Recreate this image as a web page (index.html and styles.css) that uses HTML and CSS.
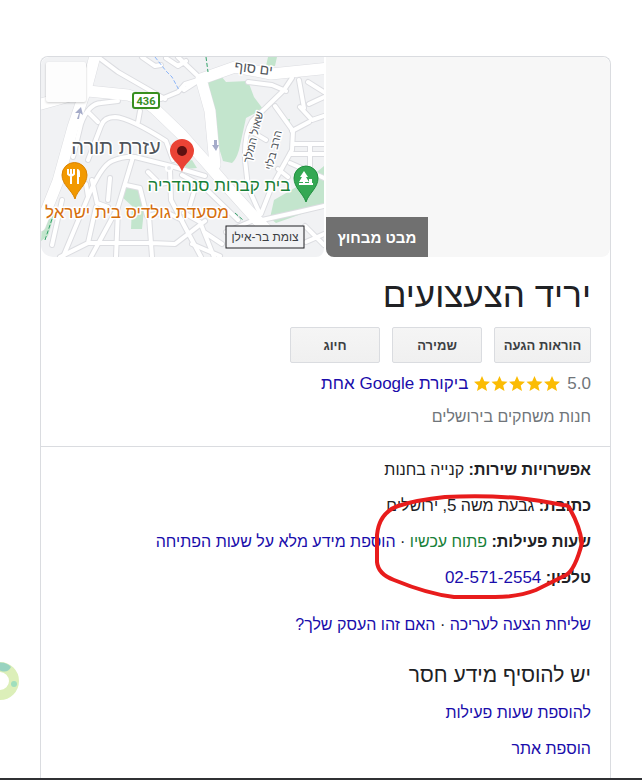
FILE: index.html
```html
<!DOCTYPE html>
<html lang="he" dir="rtl">
<head>
    <meta charset="UTF-8">
    <meta name="viewport" content="width=device-width, initial-scale=1.0">
    <title>יריד הצעצועים</title>
    <link rel="stylesheet" href="styles.css">
</head>
<body>
    <main class="card">
        <div class="media">
            <div class="photo">
                <button class="photo-label" type="button">מבט מבחוץ</button>
            </div>
            <div class="map">
                <svg viewBox="41 57 284 200" preserveAspectRatio="xMinYMid slice" role="img" aria-label="מפה">
                    <defs>
                        <g id="streets">
                            <path d="M98 57L118 72L165 99M161 99L178 92L185 84L201 79M178 57L201 79M166 58L178 66L186 61M184 90L201 79M142 57L155 66L161 65"/>
                            <path d="M73 157L81 124Q88 104 101 103L118 101M88 112L98 122M88 160L101 126Q104 117 115 117Q130 118 166 141L173 160M138 122L140 111"/>
                            <path d="M248 82L272 85L286 91M292 78L284 90L252 121Q244 134 245 160L248 187L260 214M275 106L293 131L292 150L272 186L261 214M254 133L266 140M278 169L288 177"/>
                            <path d="M292 131L309 122M293 144H324M290 154H324M299 80L304 108M300 107L312 120L324 116M308 82L324 92M309 104L324 97M310 144V166M290 163L324 178"/>
                            <path d="M63 257L88 197Q101 166 112 161Q124 156 135 157L171 166L205 176M133 157L118 207L91 257M88 197L86 184M92 180L97 203L108 207M110 178L108 200"/>
                            <path d="M60 257L88 243H151L175 244L205 221M118 210L116 257M149 216L152 257M96 207L88 243M126 185L140 188L147 216L166 212L182 220M170 170L171 200L185 227L201 257M148 172L160 184L171 182M62 200L52 245"/>
                            <path d="M182 175L204 187L238 220M184 213L200 222L214 257M192 244L220 256M222 244L204 232M262 220L298 212L324 206M305 226L324 245M306 242L324 234M254 220L226 232M196 185L190 205"/>
                        </g>
                        <g id="avenues">
                            <path d="M34 106L88 91L128 95Q145 100 155 109L181 134L205 161L231 191L258 221L270 233"/>
                            <path d="M96 52L87 86L73 127L58 181L40 226"/>
                            <path d="M201 79L235 67L271 74L330 68M201 79L210 111L215 165"/>
                        </g>
                    </defs>
                    <rect class="land" x="41" y="57" width="284" height="200"/>
                    <path class="park" d="M208 81L221 76L226 82L248 81L254 97L263 109L246 118L239 150Q236 160 232 163L223 161L216 138ZM268 57H277L275 66H266ZM184 162L192 160L197 168L186 169ZM285 119L290 119V124L283 121ZM122 197L127 183L142 186L141 197L144 210L142 229L131 229L132 206ZM274 200L305 182L324 166V206L276 223L270 218ZM42 226L55 212L48 236L41 241Z"/>
                    <use href="#streets" class="road-edge"/>
                    <use href="#avenues" class="avenue-edge"/>
                    <use href="#streets" class="road"/>
                    <use href="#avenues" class="avenue"/>
                    <circle class="roundabout" cx="169" cy="168" r="3"/>
                    <path class="path-blue" d="M155 57L166 71L172 77L179 90"/>
                    <path class="path-green" d="M206 57L208 72M45 240L54 213M235 213L243 220"/>
                    <path class="arrow" d="M77 119L79 113L75 113L81 107L83 115L80 113L79 119ZM214 140H217V145H219L216 151L212 145H214Z"/>
                    <rect class="thumb" x="46" y="62" width="40" height="40" rx="2"/>

                    <rect class="route" x="133" y="93" width="26" height="15" rx="2"/>
                    <text class="route-number" x="146" y="105">436</text>

                    <text class="place area" x="116" y="154">עזרת תורה</text>
                    <text class="street" transform="translate(253 73) rotate(7)">ים סוף</text>
                    <text class="street small" transform="translate(257 138) rotate(-76)">שאול המלך</text>
                    <text class="street small" transform="translate(277 151) rotate(-76)">הרב בלוי</text>
                    <text class="place cemetery" x="219" y="191">בית קברות סנהדריה</text>
                    <text class="place food" x="137" y="218">מסעדת גולדיס בית ישראל</text>

                    <rect class="station" x="226" y="226" width="78" height="22"/>
                    <text class="station-name" x="265" y="241">צומת בר-אילן</text>

                    <path class="pin-red" d="M182 172C180 163 170 160 170 151A12 12 0 0 1 194 151C194 160 184 163 182 172Z"/>
                    <circle class="pin-dot" cx="182" cy="151" r="5"/>
                    <path class="pin-orange" d="M75 199C72 190 62 185 62 175A12 12 0 0 1 87 175C87 185 77 190 75 199Z"/>
                    <path class="fork" d="M68 169V174Q71 177 74 174V169M71 169V184M78 184V170"/>
                    <path class="glyph" d="M77 169Q80 169 80 173V177H77Z"/>
                    <path class="pin-green" d="M306 202C303 193 294 188 294 178A12 12 0 0 1 318 178C318 188 309 193 306 202Z"/>
                    <path class="glyph" d="M304 171L308 177H306L309 182H305V183H313V185H299V183H303V182H299L302 177H300ZM309 179H312V183H309Z"/>
                </svg>
            </div>
        </div>

        <header class="summary">
            <h1>יריד הצעצועים</h1>
            <div class="actions">
                <button class="wide" type="button">הוראות הגעה</button>
                <button type="button">שמירה</button>
                <button type="button">חיוג</button>
            </div>
            <div class="rating">
                <span>5.0</span>
                <svg class="stars" viewBox="0 0 87 16" role="img" aria-label="5 כוכבים">
                    <defs>
                        <path id="star" d="M8 0L10.3 5.3L16 5.8L11.7 9.6L13 15L8 12.1L3 15L4.3 9.6L0 5.8L5.7 5.3Z"/>
                    </defs>
                    <use href="#star"/>
                    <use href="#star" x="17.5"/>
                    <use href="#star" x="35"/>
                    <use href="#star" x="52.5"/>
                    <use href="#star" x="70"/>
                </svg>
                <a href="#">ביקורת Google אחת</a>
            </div>
            <p class="category">חנות משחקים בירושלים</p>
        </header>

        <section class="details">
            <p><b>אפשרויות שירות:</b> קנייה בחנות</p>
            <p><b>כתובת:</b> גבעת משה <span class="latin">5</span>, ירושלים</p>
            <p><b>שעות פעילות:</b> <span class="open">פתוח עכשיו</span> · <a href="#">הוספת מידע מלא על שעות הפתיחה</a></p>
            <p><b>טלפון:</b> <a class="latin" href="#" dir="ltr">02-571-2554</a></p>
            <svg class="marker" viewBox="0 0 212 108" aria-hidden="true">
                <path d="M190 12Q165 7 145 5Q110 2 72 4Q43 7 25 13Q6 20 4 42V69Q5 81 21 87Q55 101 81 104H122Q145 104 163 97L193 82Q202 77 209 50Q207 34 197 16Q196 12 190 12"/>
            </svg>
        </section>

        <p class="suggest"><a href="#">שליחת הצעה לעריכה</a> · <a href="#">האם זהו העסק שלך?</a></p>

        <section class="missing">
            <h2>יש להוסיף מידע חסר</h2>
            <p><a href="#">להוספת שעות פעילות</a></p>
            <p><a href="#">הוספת אתר</a></p>
        </section>
    </main>

    <svg class="ring" viewBox="0 0 20 40" aria-hidden="true">
        <circle class="ring-base" cx="0" cy="20" r="14"/>
        <path class="ring-teal" d="M-4 2Q6 0 11 6Q8 12 1 10L-4 8Z"/>
        <circle class="ring-dot" cx="14" cy="23" r="3"/>
    </svg>
    <footer class="bottom-bar"></footer>
</body>
</html>
```
FILE: styles.css
```css
* {
    box-sizing: border-box;
}
body {
    display: flex;
    flex-direction: column;
    min-height: 100vh;
    margin: 0;
    padding-top: 56px;
    background-color: #fff;
    color: #202124;
    font-family: "Liberation Sans", Arial, sans-serif;
    font-size: 16px;
    line-height: 24px;
}
h1, h2, p {
    margin: 0;
    font-weight: normal;
}
a {
    color: #1a0dab;
    text-decoration: none;
}
.latin {
    font-size: 17px;
}
.card {
    flex: 1;
    margin: 0 31px 0 40px;
    border: 1px solid #dadce0;
    border-bottom: none;
    border-radius: 8px 8px 0 0;
}

/* map and photo */
.media {
    display: grid;
    grid-template-columns: 285fr 283fr;
    gap: 2px;
    height: 200px;
    overflow: hidden;
    border-radius: 8px;
}
.photo {
    display: flex;
    justify-content: flex-end;
    align-items: flex-end;
    overflow: hidden;
    border-radius: 0 8px 8px 8px;
    background-color: #f7f7f7;
}
.photo-label {
    height: 40px;
    padding: 0 12px;
    border: none;
    background-color: #707070;
    color: #fff;
    font: bold 15px "Liberation Sans", Arial, sans-serif;
}
.map {
    overflow: hidden;
    border-radius: 8px 0 8px 12px;
}
.map svg {
    display: block;
    width: 100%;
    height: 100%;
}
.map text {
    direction: ltr;
    text-anchor: middle;
    stroke: #fff;
    stroke-width: 3px;
    stroke-linejoin: round;
    paint-order: stroke;
}
.land {
    fill: #f1f2f4;
}
.park {
    fill: #c3e5cd;
}
.road-edge, .road, .avenue-edge, .avenue {
    fill: none;
    stroke-linejoin: round;
    stroke-linecap: round;
}
.road-edge {
    stroke: #dcdde1;
    stroke-width: 6px;
}
.avenue-edge {
    stroke: #dcdde1;
    stroke-width: 12px;
}
.road {
    stroke: #fff;
    stroke-width: 4px;
}
.avenue {
    stroke: #fff;
    stroke-width: 11px;
}
.roundabout {
    fill: #e8eaed;
    stroke: #fff;
    stroke-width: 2px;
}
.path-blue, .path-green {
    fill: none;
    stroke-dasharray: 4 2;
}
.path-blue {
    stroke: #8ab4f8;
}
.path-green {
    stroke: #34a36a;
}
.arrow {
    fill: #a5abc9;
}
.thumb {
    fill: #fdfdfd;
    filter: drop-shadow(0 1px 1px rgba(0, 0, 0, 0.2));
}
.route {
    fill: #fff;
    stroke: #388e1f;
    stroke-width: 2px;
}
.map .route-number {
    fill: #388e1f;
    stroke: none;
    font: bold 11px Roboto, sans-serif;
}
.place {
    fill: #50555b;
    font-size: 17px;
}
.area {
    font-size: 20px;
}
.street {
    fill: #50555b;
    font-size: 14px;
}
.small {
    font-size: 11px;
}
.cemetery {
    fill: #188038;
}
.food {
    fill: #d56e0c;
}
.station {
    fill: #f1f2f4;
    stroke: #202124;
    stroke-width: 1px;
}
.map .station-name {
    fill: #3c4043;
    stroke: none;
    font-size: 12px;
}
.pin-red {
    fill: #ea4335;
}
.pin-dot {
    fill: #5f1111;
}
.pin-orange {
    fill: #f29900;
    stroke: #d98200;
}
.pin-green {
    fill: #34a853;
    stroke: #1e8e3e;
}
.glyph {
    fill: #fff;
}
.fork {
    fill: none;
    stroke: #fff;
    stroke-width: 2px;
}

/* title block */
.summary {
    padding: 16px 19px 17px;
    border-bottom: 1px solid #dadce0;
}
h1 {
    font-size: 35px;
    line-height: 44px;
}
.actions {
    display: flex;
    gap: 12px;
    margin-top: 10px;
}
.actions button {
    width: 90px;
    height: 36px;
    padding: 0;
    border: 1px solid #dadce0;
    border-radius: 2px;
    background: linear-gradient(#f5f5f5, #f0f0f0);
    color: #3c4043;
    font: bold 13px "Liberation Sans", Arial, sans-serif;
}
.actions .wide {
    width: 97px;
}
.rating {
    display: flex;
    align-items: center;
    gap: 6px;
    margin-top: 9px;
    color: #70757a;
    font-size: 17px;
}
.stars {
    width: 87px;
    height: 16px;
    fill: #fbbc04;
}
.category {
    margin-top: 9px;
    color: #70757a;
}

/* facts */
.details {
    position: relative;
    display: flex;
    flex-direction: column;
    gap: 12px;
    padding: 11px 19px 0;
}
.open {
    color: #188038;
}
.marker {
    position: absolute;
    top: 46px;
    right: 25px;
    width: 212px;
    height: 108px;
    fill: none;
    stroke: #e81c1c;
    stroke-width: 4px;
    stroke-linecap: round;
}
.suggest {
    padding: 23px 19px 0;
}
.missing {
    display: flex;
    flex-direction: column;
    gap: 12px;
    padding: 24px 19px 16px;
}
h2 {
    font-size: 21px;
    line-height: 28px;
}
.ring {
    position: absolute;
    top: 661px;
    left: 0;
    width: 20px;
    height: 40px;
}
.ring-base {
    fill: none;
    stroke: #dcefb9;
    stroke-width: 10px;
}
.ring-teal {
    fill: #98d3c0;
}
.ring-dot {
    fill: #a0dfbd;
}
.bottom-bar {
    height: 2px;
    background-color: #303134;
}
```
